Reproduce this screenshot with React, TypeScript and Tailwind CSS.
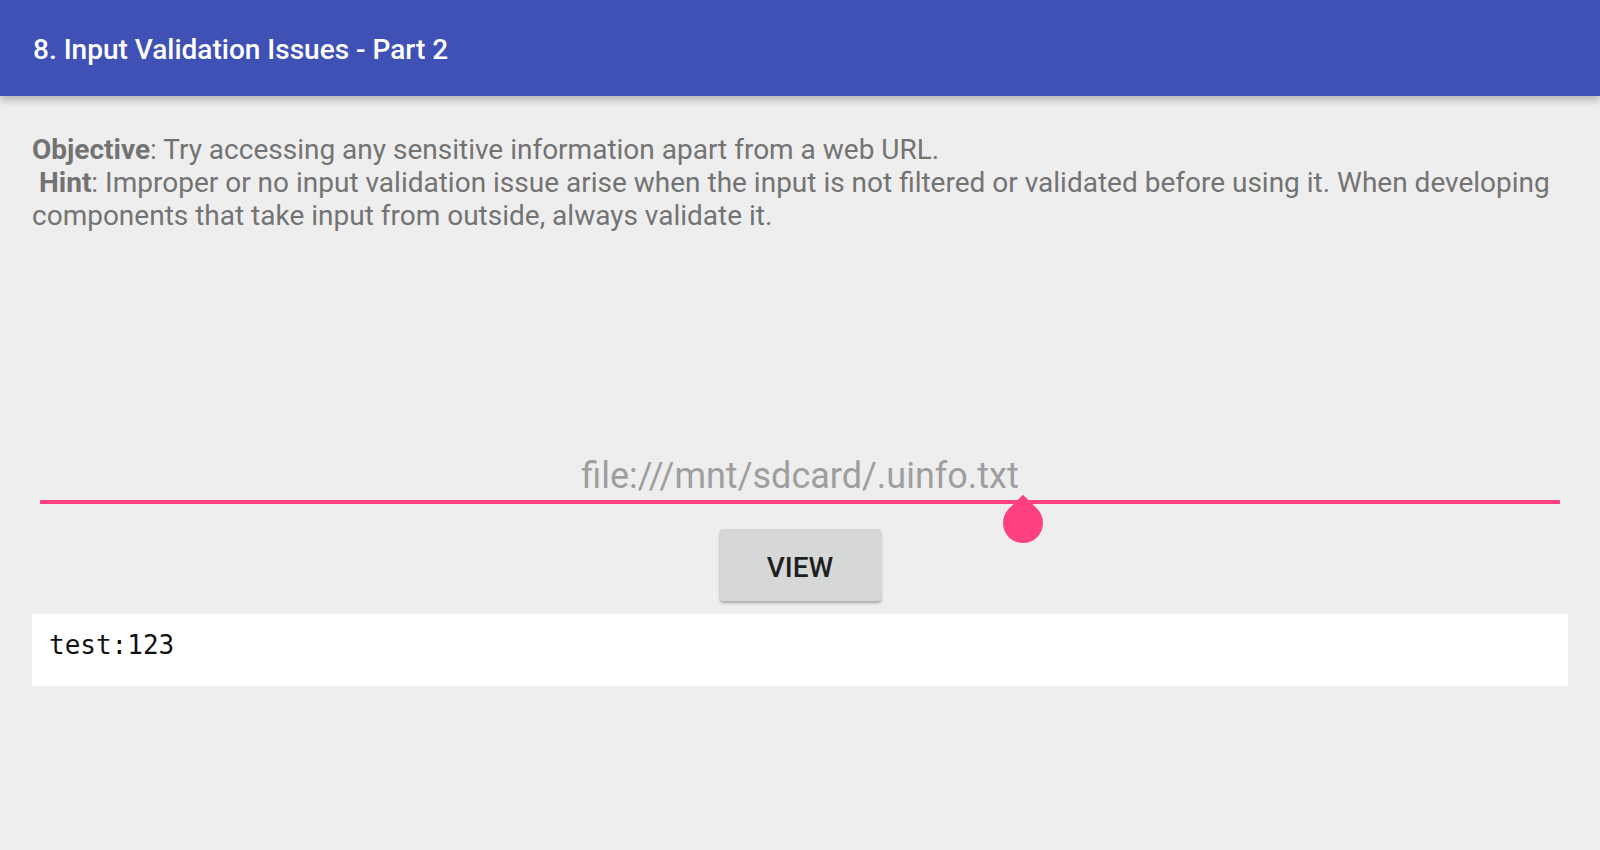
import { useState } from 'react';

export default function App() {
  const [url, setUrl] = useState('file:///mnt/sdcard/.uinfo.txt');

  return (
    <div className="min-h-[850px] w-full bg-[#eeeeee] font-['Roboto',sans-serif]">
      <header className="relative z-10 flex h-[96px] items-center bg-[#3f51b5] px-[33px] pt-[4px] shadow-[0_4px_8px_rgba(0,0,0,0.25)]">
        <h1 className="text-[28px] font-medium text-white">8. Input Validation Issues - Part 2</h1>
      </header>

      <main className="px-[32px] pt-[37px]">
        <p className="text-[28px] leading-[33px] text-[#737373]">
          <b className="font-bold">Objective</b>: Try accessing any sensitive information apart from a web URL.
          <br />
          <b className="ml-[7px] font-bold">Hint</b>: Improper or no input validation issue arise when the input is not
          filtered or validated before using it. When developing components that take input from outside, always
          validate it.
        </p>

        <div className="relative mx-[8px] mt-[220px]">
          <input
            value={url}
            onChange={(e) => setUrl(e.target.value)}
            className="h-[52px] w-full border-b-[4px] border-[#ff4081] bg-transparent text-center text-[36px] text-[#9e9e9e] outline-none"
          />
          {/* caret handle */}
          <div className="absolute left-[963px] top-[51px] h-[40px] w-[40px] rotate-45 rounded-full rounded-tl-none bg-[#ff4081]" />
        </div>

        <div className="mt-[25px] flex justify-center">
          <button className="h-[72px] w-[161px] rounded-[3px] bg-[#d6d7d7] pt-[5px] text-[28px] font-medium text-[#1f1f1f] shadow-[0_2px_3px_rgba(0,0,0,0.3)]">
            VIEW
          </button>
        </div>

        <div className="mt-[13px] flex h-[72px] w-[1536px] items-center bg-white px-[17px] pb-[10px]">
          <span className="font-['DejaVu_Sans_Mono',monospace] text-[26px] text-[#111]">test:123</span>
        </div>
      </main>
    </div>
  );
}
